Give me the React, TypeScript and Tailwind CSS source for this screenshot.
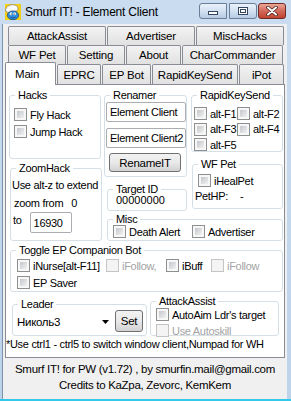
import type { ReactNode } from "react";

function Tab({ label, w }: { label: string; w: string }) {
  return (
    <div
      className={`${w} h-full flex items-center justify-center border border-b-0 border-[#898c95] rounded-t-[2px] bg-linear-to-b from-[#f3f3f3] to-[#e1e1e1] text-[11.5px] tracking-[-0.2px] whitespace-nowrap`}
    >
      {label}
    </div>
  );
}

function Group({ label, className = "", children }: { label: string; className?: string; children?: ReactNode }) {
  return (
    <fieldset className={`border border-[#d5dfe5] rounded-[3px] ${className}`}>
      <legend className="ml-[5px] px-[3px] leading-[12px]">{label}</legend>
      {children}
    </fieldset>
  );
}

function Box({ off }: { off?: boolean }) {
  if (off) return <span className="w-[13px] h-[13px] shrink-0 border border-[#c4c4c4] bg-[#f4f4f4]" />;
  return (
    <span className="w-[13px] h-[13px] shrink-0 border border-[#8e8f8f] bg-[#f7f7f7] p-[2px] flex">
      <span className="flex-1 bg-linear-to-br from-[#c3c7cc] to-[#f1f1f1]" />
    </span>
  );
}

function Check({ label, off, className = "" }: { label: string; off?: boolean; className?: string }) {
  return (
    <div className={`flex items-center h-[13px] ${className}`}>
      <Box off={off} />
      <span className={`ml-[3px] whitespace-nowrap ${off ? "text-[#a3a3a3]" : ""}`}>{label}</span>
    </div>
  );
}

function Button({ children, className = "" }: { children: ReactNode; className?: string }) {
  return (
    <div
      className={`flex items-center justify-center border border-[#707070] rounded-[3px] bg-linear-to-b from-[#f2f2f2] via-[#e9e9e9] to-[#d2d2d2] text-[11.5px] ${className}`}
    >
      {children}
    </div>
  );
}

function Field({ value, className = "" }: { value: string; className?: string }) {
  return (
    <div
      className={`flex items-center pl-[3px] border border-[#abadb3] rounded-[2px] bg-white whitespace-nowrap overflow-hidden ${className}`}
    >
      {value}
    </div>
  );
}

function SmurfIcon() {
  return (
    <svg width="16" height="16" viewBox="0 0 16 16">
      <rect width="16" height="16" fill="#f3cf17" />
      <path d="M0.5 7 C0.5 1.5 7 -0.5 11 1.5 C13.5 2.8 13.5 6 11.5 7 L3 8.5 Z" fill="#fafafa" stroke="#6b6b6b" strokeWidth="0.6" />
      <ellipse cx="8" cy="11.3" rx="5.6" ry="4.4" fill="#2f8de0" stroke="#163d70" strokeWidth="0.7" />
      <ellipse cx="6" cy="9.8" rx="1.3" ry="1.5" fill="#fff" />
      <ellipse cx="9.6" cy="9.8" rx="1.3" ry="1.5" fill="#fff" />
      <circle cx="6.3" cy="10" r="0.6" fill="#111" />
      <circle cx="9.3" cy="10" r="0.6" fill="#111" />
      <path d="M5.5 13.2 Q8 14.8 10.5 13.2" stroke="#163d70" strokeWidth="0.7" fill="none" />
    </svg>
  );
}

function CaptionButtons() {
  return (
    <div className="flex items-start ml-auto mr-[5px] mt-[3px]">
      <div className="w-[28px] h-[16px] flex items-end justify-center pb-[3px] border border-[#6b7e98] rounded-l-[3px] bg-linear-to-b from-[#e9f1fb] via-[#d3e1f1] to-[#b6cbe3]">
        <span className="w-[10px] h-[4px] bg-white border border-[#34465e]" />
      </div>
      <div className="w-[28px] h-[16px] ml-[2px] flex items-center justify-center border border-[#6b7e98] rounded-r-[3px] bg-linear-to-b from-[#e9f1fb] via-[#d3e1f1] to-[#b6cbe3]">
        <span className="w-[10px] h-[8px] border border-[#34465e] bg-white p-[1px] flex">
          <span className="flex-1 border border-[#34465e]" />
        </span>
      </div>
      <div className="w-[28px] h-[16px] ml-[1px] flex items-center justify-center border border-[#6e2a25] rounded-[3px] bg-linear-to-b from-[#eaa799] via-[#d2685a] to-[#c0432f]">
        <svg width="12" height="10" viewBox="0 0 12 10">
          <path d="M2 1.5 L10 8.5 M10 1.5 L2 8.5" stroke="#4a2320" strokeWidth="3.6" strokeLinecap="round" />
          <path d="M2 1.5 L10 8.5 M10 1.5 L2 8.5" stroke="#fff" strokeWidth="2" strokeLinecap="round" />
        </svg>
      </div>
    </div>
  );
}

const row1 = [
  { label: "AttackAssist", w: "w-[98px]" },
  { label: "Advertiser", w: "w-[88px]" },
  { label: "MiscHacks", w: "w-[88px]" },
];

const row2 = [
  { label: "WF Pet", w: "w-[58px]" },
  { label: "Setting", w: "w-[58px]" },
  { label: "About", w: "w-[55px]" },
  { label: "CharCommander", w: "w-[101px]" },
];

const row3 = [
  { label: "EPRC", w: "w-[44px]" },
  { label: "EP Bot", w: "w-[49px]" },
  { label: "RapidKeySend", w: "w-[86px]" },
  { label: "iPot", w: "w-[45px]" },
];

export default function App() {
  return (
    <div className="w-[291px] h-[401px] overflow-hidden flex flex-col bg-linear-to-b from-[#cadcf0] to-[#bdd3ea] font-['Liberation_Sans',Arial,sans-serif] text-[11px] leading-[12px] tracking-[-0.3px] text-black">
      <div className="h-[24px] shrink-0 flex items-start">
        <div className="ml-[5px] mt-[4px]">
          <SmurfIcon />
        </div>
        <span className="ml-[4px] mt-[5px] text-[12px] leading-[14px] tracking-[-0.2px]">Smurf IT! - Element Client</span>
        <CaptionButtons />
      </div>

      <div className="flex-1 ml-[2px] mr-[4px] border-l border-[#7c93ad] bg-[#f0f0f0] flex flex-col">
        <div className="mt-[2px] ml-[2px] w-[280px]">
          <div className="h-[19px] ml-[3px] flex gap-[1px]">
            {row1.map((t) => (
              <Tab key={t.label} {...t} />
            ))}
          </div>
          <div className="h-[19px] ml-[3px] flex gap-[1px]">
            {row2.map((t) => (
              <Tab key={t.label} {...t} />
            ))}
          </div>
          <div className="h-[20px] flex items-start gap-[1px]">
            <div className="relative z-10 w-[51px] h-[23px] -mt-[2px] pt-[5px] pl-[9px] border border-b-0 border-[#898c95] rounded-t-[2px] bg-white text-[11.5px] tracking-[-0.2px]">
              Main
            </div>
            {row3.map((t) => (
              <Tab key={t.label} {...t} />
            ))}
          </div>

          <div className="h-[274px] border border-[#898c95] bg-white flex flex-col">
            <div className="flex mt-[4px] ml-[3px]">
              <div className="w-[93px] flex flex-col">
                <Group label="Hacks" className="w-[92px] h-[70px]">
                  <div className="ml-[4px] mt-[5px]">
                    <Check label="Fly Hack" className="h-[17px]" />
                    <Check label="Jump Hack" className="h-[17px]" />
                  </div>
                </Group>
                <Group label="ZoomHack" className="ml-[1px] mt-[3px] w-[92px] h-[79px]">
                  <div className="mt-[5px] ml-[1px] whitespace-nowrap">Use alt-z to extend</div>
                  <div className="mt-[6px] ml-[3px] flex">
                    <span>zoom from</span>
                    <span className="ml-[8px]">0</span>
                  </div>
                  <div className="mt-[3px] ml-[2px] flex items-start">
                    <span className="mt-[2px]">to</span>
                    <Field value="16930" className="ml-[8px] w-[42px] h-[21px]" />
                  </div>
                </Group>
              </div>

              <div className="ml-[2px] flex flex-col">
                <div className="flex items-start">
                  <div className="w-[83px] flex flex-col">
                    <Group label="Renamer" className="w-[83px] h-[88px]">
                      <Field value="Element Client" className="mt-[1px] ml-[1px] w-[80px] h-[20px]" />
                      <Field value="Element Client2" className="mt-[6px] ml-[1px] w-[80px] h-[20px]" />
                      <Button className="mt-[5px] ml-[4px] w-[72px] h-[19px]">RenameIT</Button>
                    </Group>
                    <Group label="Target ID" className="mt-[6px] ml-[3px] w-[80px] h-[28px]">
                      <div className="-mt-[1px] ml-[8px] text-[11px] tracking-normal">00000000</div>
                    </Group>
                  </div>
                  <div className="ml-[4px] w-[92px] flex flex-col">
                    <Group label="RapidKeySend" className="w-[92px] h-[63px]">
                      <div className="mt-[5px] ml-[2px] grid grid-cols-[43px_auto] auto-rows-[15.5px] items-center">
                        <Check label="alt-F1" />
                        <Check label="alt-F2" />
                        <Check label="alt-F3" />
                        <Check label="alt-F4" />
                        <Check label="alt-F5" />
                      </div>
                    </Group>
                    <Group label="WF Pet" className="mt-[6px] ml-[1px] w-[91px] h-[51px]">
                      <Check label="iHealPet" className="mt-[4px] ml-[5px]" />
                      <div className="mt-[3px] ml-[2px] flex">
                        <span>PetHP:</span>
                        <span className="ml-[12px]">-</span>
                      </div>
                    </Group>
                  </div>
                </div>
                <Group label="Misc" className="mt-[2px] ml-[3px] w-[176px] h-[28px]">
                  <div className="ml-[5px] flex">
                    <Check label="Death Alert" className="w-[79px]" />
                    <Check label="Advertiser" />
                  </div>
                </Group>
              </div>
            </div>

            <Group label="Toggle EP Companion Bot" className="mt-[3px] ml-[4px] w-[273px] h-[48px]">
              <div className="mt-[3px] ml-[6px] flex">
                <Check label="iNurse[alt-F11]" className="w-[89px]" />
                <Check label="iFollow," off className="w-[60px]" />
                <Check label="iBuff" className="w-[45px]" />
                <Check label="iFollow" off />
              </div>
              <Check label="EP Saver" className="mt-[4px] ml-[6px]" />
            </Group>

            <div className="mt-[3px] ml-[6px] flex items-start">
              <Group label="Leader" className="mt-[3px] w-[135px] h-[38px]">
                <div className="ml-[2px] flex items-start">
                  <div className="mt-[2px] w-[98px] h-[19px] pl-[2px] pr-[4px] flex items-center justify-between bg-white text-[11.5px]">
                    <span>Николь3</span>
                    <svg width="7" height="4" viewBox="0 0 7 4">
                      <path d="M0 0 H7 L3.5 4 Z" fill="#000" />
                    </svg>
                  </div>
                  <Button className="ml-[2px] w-[28px] h-[22px]">Set</Button>
                </div>
              </Group>
              <Group label="AttackAssist" className="ml-[3px] w-[129px] h-[41px]">
                <Check label="AutoAim Ldr's target" className="mt-[1px] ml-[5px]" />
                <Check label="Use Autoskill" off className="mt-[3px] ml-[5px]" />
              </Group>
            </div>

            <div className="mt-[2px] whitespace-nowrap">*Use ctrl1 - ctrl5 to switch window client,Numpad for WH</div>
          </div>

          <div className="pt-[4px] text-center text-[11.5px] leading-[15.5px] whitespace-nowrap">
            <div>Smurf IT! for PW (v1.72) , by smurfin.mail@gmail.com</div>
            <div>Credits to KaZpa, Zevorc, KemKem</div>
          </div>
        </div>
      </div>
      <div className="h-[2px] shrink-0 bg-[#33c9ea]" />
    </div>
  );
}
